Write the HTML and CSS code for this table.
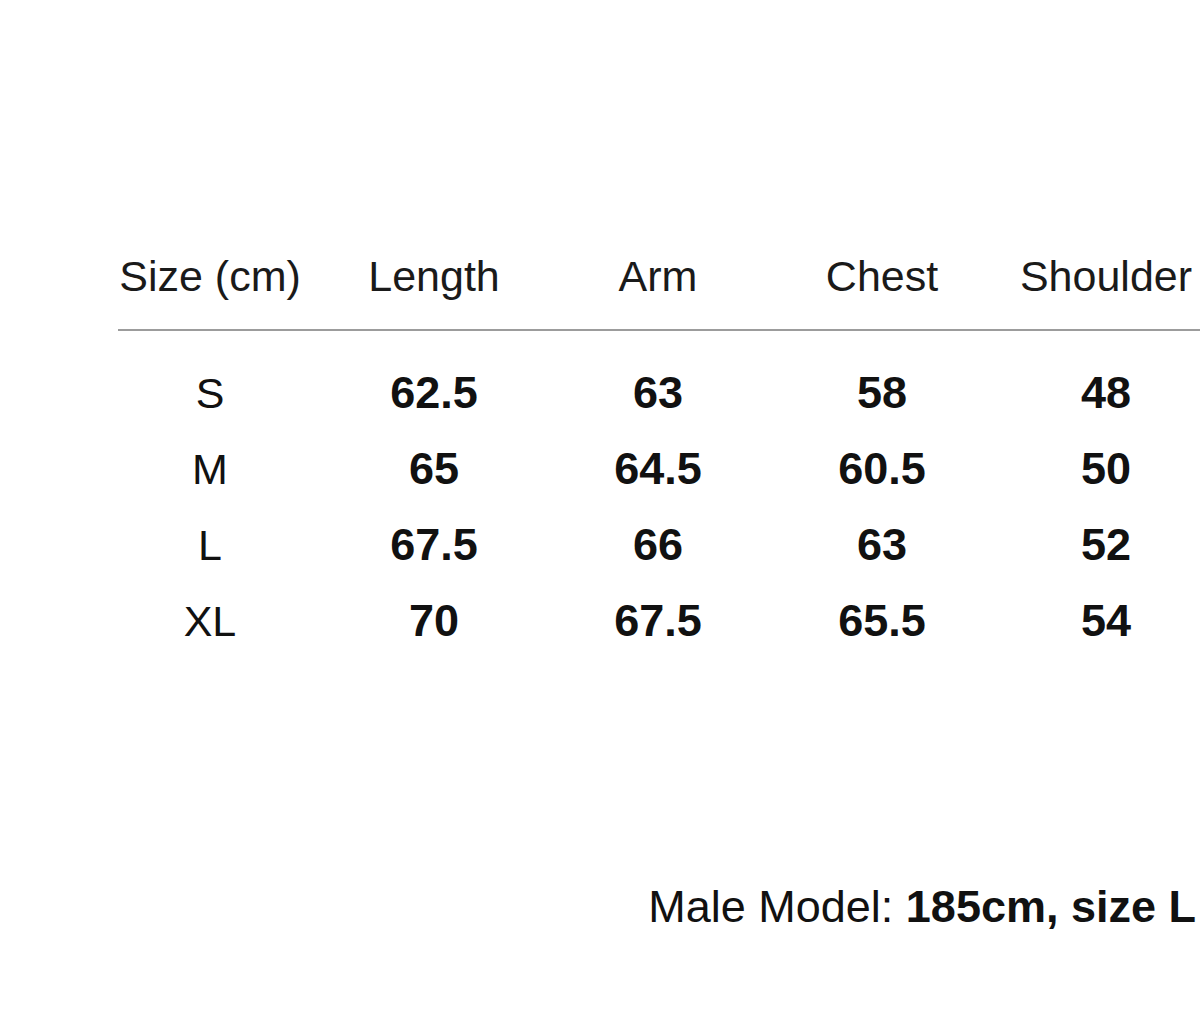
FILE: index.html
```html
<!DOCTYPE html>
<html lang="en">
<head>
<meta charset="utf-8">
<title>Size chart</title>
<link rel="stylesheet" href="styles.css">
</head>
<body>
<main class="chart">
  <div class="row head">
    <div class="cell">Size (cm)</div>
    <div class="cell">Length</div>
    <div class="cell">Arm</div>
    <div class="cell">Chest</div>
    <div class="cell">Shoulder</div>
  </div>
  <div class="rule"></div>
  <div class="body">
    <div class="row data">
      <div class="cell size">S</div>
      <div class="cell">62.5</div>
      <div class="cell">63</div>
      <div class="cell">58</div>
      <div class="cell">48</div>
    </div>
    <div class="row data">
      <div class="cell size">M</div>
      <div class="cell">65</div>
      <div class="cell">64.5</div>
      <div class="cell">60.5</div>
      <div class="cell">50</div>
    </div>
    <div class="row data">
      <div class="cell size">L</div>
      <div class="cell">67.5</div>
      <div class="cell">66</div>
      <div class="cell">63</div>
      <div class="cell">52</div>
    </div>
    <div class="row data">
      <div class="cell size">XL</div>
      <div class="cell">70</div>
      <div class="cell">67.5</div>
      <div class="cell">65.5</div>
      <div class="cell">54</div>
    </div>
  </div>
  <p class="note">Male Model: <strong>185cm, size L</strong></p>
</main>
</body>
</html>
```
FILE: styles.css
```css
html, body {
  margin: 0;
  padding: 0;
  background: #ffffff;
  overflow: hidden;
}

body {
  width: 1200px;
  height: 1022px;
  font-family: "Liberation Sans", Arial, Helvetica, sans-serif;
  color: #111111;
}

.chart {
  padding-top: 246px;
}

.row {
  display: grid;
  grid-template-columns: repeat(5, 224px);
  padding-left: 98px;
  width: 1120px;
}

.cell {
  text-align: center;
  white-space: nowrap;
}

.head {
  height: 60px;
  line-height: 60px;
  font-size: 43px;
  font-weight: 400;
  color: #1a1a1a;
}

.rule {
  margin-top: 23px;
  margin-left: 118px;
  height: 2px;
  background: #9c9c9c;
}

.body {
  margin-top: 24px;
}

.data {
  height: 76px;
  line-height: 76px;
  font-size: 45px;
  font-weight: 700;
}

.data .size {
  font-weight: 400;
  font-size: 43px;
}

.note {
  margin: 218px 0 0 0;
  height: 60px;
  line-height: 60px;
  font-size: 45px;
  text-align: right;
  padding-right: 4px;
  white-space: nowrap;
  color: #111111;
}

.note strong {
  font-weight: 700;
}
```
